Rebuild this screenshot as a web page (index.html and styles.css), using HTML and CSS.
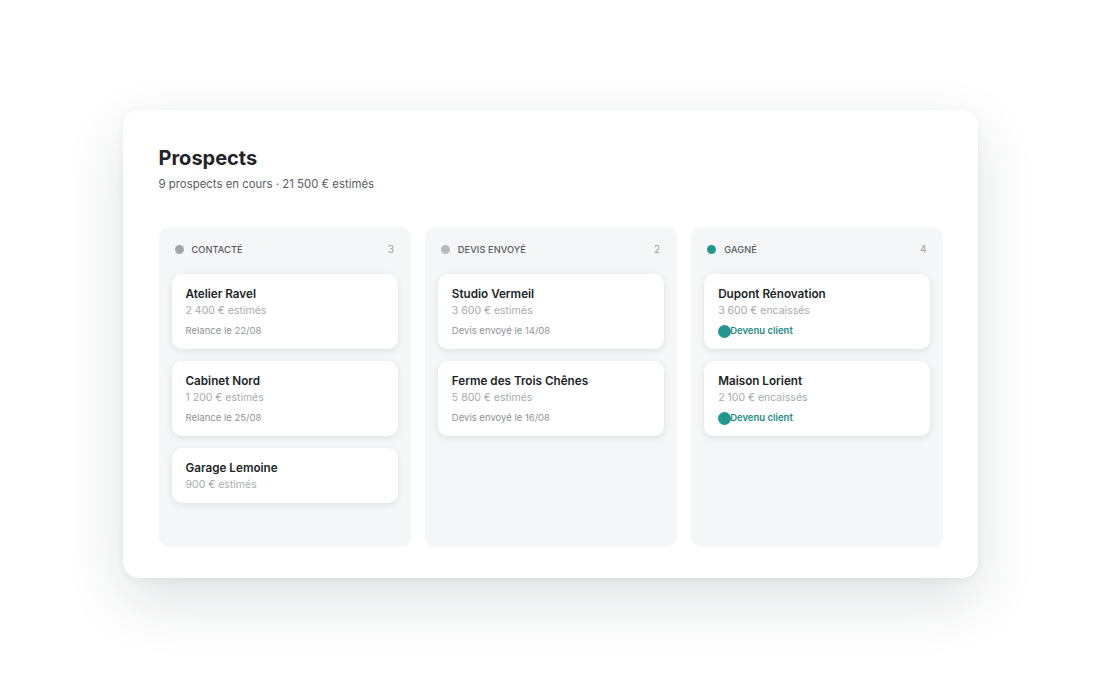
FILE: index.html
```html
<!DOCTYPE html>
<html lang="fr">
<head>
    <meta charset="UTF-8">
    <meta name="viewport" content="width=device-width, initial-scale=1.0">
    <title>Prospects</title>
    <link rel="stylesheet" href="styles.css">
</head>
<body>
    <div class="board">
        <h1>Prospects</h1>
        <p class="summary">9 prospects en cours · 21 500 € estimés</p>

        <div class="columns">
            <div class="column">
                <div class="column-head">
                    <span class="dot dot-contact"></span>
                    <span class="column-name">Contacté</span>
                    <span class="column-count">3</span>
                </div>
                <div class="card">
                    <div class="card-title">Atelier Ravel</div>
                    <div class="card-amount">2 400 € estimés</div>
                    <div class="card-meta">Relance le 22/08</div>
                </div>
                <div class="card">
                    <div class="card-title">Cabinet Nord</div>
                    <div class="card-amount">1 200 € estimés</div>
                    <div class="card-meta">Relance le 25/08</div>
                </div>
                <div class="card">
                    <div class="card-title">Garage Lemoine</div>
                    <div class="card-amount">900 € estimés</div>
                </div>
            </div>

            <div class="column">
                <div class="column-head">
                    <span class="dot dot-quote"></span>
                    <span class="column-name">Devis envoyé</span>
                    <span class="column-count">2</span>
                </div>
                <div class="card">
                    <div class="card-title">Studio Vermeil</div>
                    <div class="card-amount">3 600 € estimés</div>
                    <div class="card-meta">Devis envoyé le 14/08</div>
                </div>
                <div class="card">
                    <div class="card-title">Ferme des Trois Chênes</div>
                    <div class="card-amount">5 800 € estimés</div>
                    <div class="card-meta">Devis envoyé le 16/08</div>
                </div>
            </div>

            <div class="column">
                <div class="column-head">
                    <span class="dot dot-won"></span>
                    <span class="column-name">Gagné</span>
                    <span class="column-count">4</span>
                </div>
                <div class="card">
                    <div class="card-title">Dupont Rénovation</div>
                    <div class="card-amount">3 600 € encaissés</div>
                    <div class="card-status"><span class="status-dot"></span>Devenu client</div>
                </div>
                <div class="card">
                    <div class="card-title">Maison Lorient</div>
                    <div class="card-amount">2 100 € encaissés</div>
                    <div class="card-status"><span class="status-dot"></span>Devenu client</div>
                </div>
            </div>
        </div>
    </div>
</body>
</html>
```

FILE: styles.css
```css
html {
    background-color: #ffffff;
}
body {
    font-family: Inter, "Noto Sans", sans-serif;
    margin: 0;
    padding-top: 110px;
    min-height: 100vh;
    box-sizing: border-box;
    display: flex;
    justify-content: center;
    align-items: flex-start;
}
.board {
    width: 855px;
    height: 468px;
    box-sizing: border-box;
    padding: 35px 34px 31px 36px;
    background-color: #ffffff;
    border-radius: 16px;
    box-shadow: 0 22px 60px rgba(30, 40, 50, 0.14), 0 2px 8px rgba(30, 40, 50, 0.05);
}
h1 {
    margin: 0;
    font-size: 20px;
    font-weight: 700;
    color: #1f2328;
    line-height: 26px;
}
.summary {
    margin: 5px 0 0;
    font-size: 11.4px;
    color: #585d62;
    line-height: 16px;
}
.columns {
    margin-top: 35px;
    display: grid;
    grid-template-columns: repeat(3, 1fr);
    gap: 14px;
}
.column {
    height: 320px;
    box-sizing: border-box;
    padding: 11px 13px;
    background-color: #f4f6f8;
    border-radius: 10px;
    display: flex;
    flex-direction: column;
    gap: 12px;
}
.column-head {
    display: flex;
    align-items: center;
    padding: 2px 4px 0 3px;
    height: 18px;
    margin-bottom: 4px;
}
.dot {
    width: 9px;
    height: 9px;
    border-radius: 50%;
    margin-right: 8px;
}
.dot-contact {
    background-color: #a3a5a8;
}
.dot-quote {
    background-color: #b8babd;
}
.dot-won {
    background-color: #24968e;
}
.column-name {
    flex: 1;
    font-size: 9.2px;
    font-weight: 500;
    letter-spacing: 0.1px;
    text-transform: uppercase;
    color: #55595e;
}
.column-count {
    font-size: 10px;
    color: #9a9ea3;
}
.card {
    background-color: #ffffff;
    border-radius: 10px;
    padding: 12px 14px 11px;
    box-shadow: 0 2px 7px rgba(20, 30, 40, 0.09);
}
.card-title {
    font-size: 11.7px;
    font-weight: 600;
    color: #202428;
    line-height: 16px;
}
.card-amount {
    margin-top: 2px;
    font-size: 10.5px;
    color: #a6aaae;
    line-height: 14px;
}
.card-meta {
    margin-top: 6px;
    font-size: 9.5px;
    color: #8e9297;
    line-height: 14px;
}
.card-status {
    margin-top: 6px;
    display: flex;
    align-items: center;
    font-size: 9.5px;
    font-weight: 600;
    color: #1f8a82;
    line-height: 14px;
}
.status-dot {
    width: 13px;
    height: 13px;
    border-radius: 50%;
    background-color: #24968e;
    margin-right: -1px;
}
```
